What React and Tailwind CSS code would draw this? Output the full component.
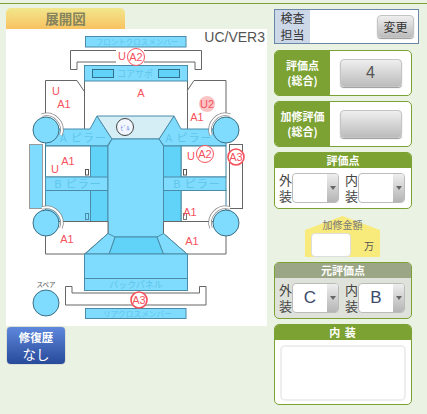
import React from 'react';

const bluePart = "fill-[#7fdcfe] stroke-[#4a8ca8]";
const darkPart = "fill-[#62d3f8] stroke-[#4a8ca8]";
const whitePart = "fill-white stroke-[#666]";

const Wheel = ({ x, y, side }) => {
    // ring only shows on the side facing the body
    const ring = side === 'left'
        ? `M${x - 4} ${y - 15}A15.5 15.5 0 0 1 ${x + 15} ${y + 5}`
        : `M${x + 4} ${y - 15}A15.5 15.5 0 0 0 ${x - 15} ${y + 5}`;
    return (
        <g>
            <path d={ring} fill="none" strokeWidth="3.5" className="stroke-[#888]" />
            <path d={ring} fill="none" strokeWidth="2" className="stroke-white" />
            <circle cx={x} cy={y} r="13" className="fill-[#7fdcfe] stroke-[#3d6f85]" />
        </g>
    );
};

const PartLabel = ({ x, y, size = 11, spacing = 0, children }) => (
    <text x={x} y={y} textAnchor="middle" fontSize={size} letterSpacing={spacing} className="fill-[#5fc5ea] font-['Noto_Sans_CJK_JP',sans-serif]">
        {children}
    </text>
);

const Mark = ({ x, y, children }) => (
    <text x={x} y={y} textAnchor="middle" fontSize="11" className="fill-[#f5525c] font-['Liberation_Sans',sans-serif]">
        {children}
    </text>
);

const Circled = ({ x, y, r = 8.5, thick, children }) => (
    <g>
        <circle cx={x} cy={y} r={r} strokeWidth={thick ? 1.6 : 1} className="fill-white stroke-[#f5525c]" />
        <Mark x={x} y={y + 4}>{children}</Mark>
    </g>
);

const CarDiagram = () => (
    <svg viewBox="6 29 261 297" className="block h-[297px] w-[261px] bg-white">
        {/* front cross member and bumper */}
        <rect x="85.5" y="36.5" width="100.5" height="10.5" className={bluePart} />
        <PartLabel x={137} y={44.5} size={7.5}>フロントクロスメンバー</PartLabel>
        <path d="M70.5 50.5H201.5V69.5H195V62H77V69.5H70.5Z" className={whitePart} />
        <rect x="116" y="48" width="28" height="16" className="fill-white" />

        {/* hood */}
        <rect x="84.5" y="65.5" width="103" height="64" className={whitePart} />
        <rect x="84.5" y="65.5" width="103" height="15.5" className={bluePart} />
        <rect x="92.5" y="69.5" width="21" height="8" className="fill-[#62d3f8] stroke-[#2f6f88]" />
        <rect x="158.5" y="69.5" width="21" height="8" className="fill-[#62d3f8] stroke-[#2f6f88]" />
        <PartLabel x={135} y={76.5} size={9}>コアサポ</PartLabel>

        {/* fenders */}
        <path d="M84 91L77 80.5H45.5V114" className="fill-white stroke-[#666]" />
        <path d="M187 91L194 80.5H226V114" className="fill-white stroke-[#666]" />

        {/* pillars and windshield */}
        <path d="M97 116L112 139L107 146H45.5V129H90Z" className={bluePart} />
        <path d="M174 116L159 139L164 146H226V129H181Z" className={bluePart} />
        <path d="M97 116H174L159 139H112Z" className="fill-[#d5edf5] stroke-[#4a8ca8]" />
        <circle cx="125" cy="127" r="8.5" className="fill-[#f2f7ff] stroke-[#444]" />
        <text x="125" y="129.5" textAnchor="middle" fontSize="6" className="fill-[#5a78e0] font-['Noto_Sans_CJK_JP',sans-serif]">ﾋﾞﾙ</text>
        <PartLabel x={83.5} y={142} spacing={1}>A ピラー</PartLabel>
        <PartLabel x={189} y={142} spacing={1}>A ピラー</PartLabel>

        {/* doors */}
        <rect x="45.5" y="146" width="45" height="31" className="fill-white stroke-[#3d7f99]" />
        <rect x="45.5" y="190" width="45" height="31.5" className={bluePart} />
        <rect x="181" y="146" width="45" height="31" className="fill-white stroke-[#3d7f99]" />
        <rect x="181" y="190" width="45" height="31.5" className="fill-white stroke-[#3d7f99]" />
        <rect x="90.5" y="146" width="17.5" height="75.5" className={darkPart} />
        <rect x="163" y="146" width="18" height="75.5" className={darkPart} />
        <rect x="45.5" y="177" width="62.5" height="13.5" className={bluePart} />
        <rect x="163" y="177" width="63" height="13.5" className={bluePart} />
        <PartLabel x={78} y={188} spacing={1}>B ピラー</PartLabel>
        <PartLabel x={197} y={188} spacing={1}>B ピラー</PartLabel>
        <rect x="85.5" y="169.5" width="3" height="5.5" className="fill-white stroke-[#555]" />
        <rect x="183.5" y="169.5" width="3" height="5.5" className="fill-white stroke-[#555]" />
        <rect x="85.5" y="213.5" width="3" height="6" className={bluePart} />
        <rect x="183.5" y="213.5" width="3" height="6" className="fill-white stroke-[#777]" />

        {/* rockers */}
        <rect x="29.5" y="144.5" width="13" height="64" className="fill-[#7fdcfe] stroke-[#999]" />
        <rect x="229.5" y="144.5" width="13" height="64" className={whitePart} />

        {/* roof */}
        <path d="M112 139H159L163.5 146V237H108V146Z" className={bluePart} />

        {/* quarters */}
        <path d="M45.5 221.5H108V233.5L84.5 254H45.5Z" className={whitePart} />
        <path d="M226 221.5H163.5V233.5L187 254H226Z" className={whitePart} />

        {/* trunk */}
        <path d="M115 237H157L163.5 254H109Z" className={darkPart} />
        <path d="M108 233.5L115 237L109 254H85Z" className={bluePart} />
        <path d="M163.5 233.5L157 237L163.5 254H187Z" className={bluePart} />
        <rect x="84.5" y="254" width="103" height="36.5" className={bluePart} />
        <line x1="84.5" y1="278.5" x2="187.5" y2="278.5" className="stroke-[#4a8ca8]" />
        <PartLabel x={136} y={288} size={9}>バックパネル</PartLabel>

        {/* rear bumper and cross member */}
        <path d="M65.5 286.5H72V293H199.5V286.5H206V305H65.5Z" className={whitePart} />
        <rect x="85.5" y="308.5" width="100.5" height="10" className={bluePart} />
        <PartLabel x={137.5} y={316.5} size={7.7}>リアクロスメンバー</PartLabel>

        <Wheel x={46} y={130} side="left" />
        <Wheel x={226} y={130} side="right" />
        <Wheel x={46} y={223} side="left" />
        <Wheel x={226} y={223} side="right" />
        <circle cx="46" cy="303" r="13" className="fill-[#7fdcfe] stroke-[#3d6f85]" />
        <text x="46" y="287" textAnchor="middle" fontSize="6.5" className="fill-[#555] font-['Noto_Sans_CJK_JP',sans-serif]">スペア</text>

        <text x="265" y="42" textAnchor="end" fontSize="14" className="fill-[#555] font-['Liberation_Sans',sans-serif]">UC/VER3</text>

        {/* damage marks */}
        <Mark x={122} y={60}>U</Mark>
        <Circled x={136} y={57}>A2</Circled>
        <Mark x={141} y={97}>A</Mark>
        <Mark x={56} y={95}>U</Mark>
        <Mark x={64} y={108}>A1</Mark>
        <circle cx="207" cy="104" r="8" className="fill-[#fbc4c4]" />
        <Mark x={207} y={108}>U2</Mark>
        <Mark x={197} y={121}>A1</Mark>
        <Mark x={68} y={165}>A1</Mark>
        <Mark x={55} y={173}>U</Mark>
        <Mark x={191} y={160}>U</Mark>
        <Circled x={205} y={154}>A2</Circled>
        <Circled x={236} y={157} r={8} thick>A3</Circled>
        <Mark x={190} y={216}>A1</Mark>
        <Mark x={67} y={243}>A1</Mark>
        <Mark x={192} y={245}>A1</Mark>
        <Circled x={139} y={300} r={8} thick>A3</Circled>
    </svg>
);

const GrayButton = ({ className, children }) => (
    <div className={`flex items-center justify-center rounded-[4px] border border-[#c4c4c4] bg-gradient-to-b from-[#efefef] to-[#bcbcbc] shadow-[0_1px_1px_#999] ${className}`}>
        {children}
    </div>
);

const ScoreCard = ({ label, value, className }) => (
    <div className={`flex h-[46px] w-[138px] overflow-hidden rounded-[5px] border border-[#7ba232] bg-white ${className}`}>
        <div className="flex w-[55px] items-center justify-center bg-[#7ba232] text-center text-[11px] font-bold leading-[15px] text-white">
            {label}
        </div>
        <div className="flex flex-1 items-center justify-center">
            <GrayButton className="h-[28px] w-[62px] font-['Liberation_Sans',sans-serif] text-[16px] text-[#555]">{value}</GrayButton>
        </div>
    </div>
);

const GradeSelect = ({ label, value }) => (
    <div className="flex items-center">
        <div className="w-[13px] text-[13px] leading-[16px] text-[#444]">{label}</div>
        <div className="flex h-[30px] w-[47px] overflow-hidden rounded-[4px] border border-[#bbb] bg-white">
            <div className="flex flex-1 items-center justify-center font-['Liberation_Sans',sans-serif] text-[17px] text-[#3b4a6b]">{value}</div>
            <div className="flex w-[11px] items-center justify-center bg-gradient-to-b from-[#eee] to-[#b5b5b5]">
                <div className="h-0 w-0 border-x-[3.5px] border-t-[4px] border-x-transparent border-t-[#666]" />
            </div>
        </div>
    </div>
);

const GradeCard = ({ title, headClass, bodyClass, outer, inner, className }) => (
    <div className={`w-[138px] overflow-hidden rounded-[5px] border border-[#7ba232] ${bodyClass} ${className}`}>
        <div className={`flex h-[15px] items-center justify-center text-[11px] font-bold text-white ${headClass}`}>{title}</div>
        <div className="flex justify-between py-[4px] pl-[4px] pr-[6px]">
            <GradeSelect label="外装" value={outer} />
            <GradeSelect label="内装" value={inner} />
        </div>
    </div>
);

export default function App() {
    return (
        <div className="h-[414px] w-[427px] overflow-hidden bg-[#eaf2e3] pt-[3px] font-['Noto_Sans_CJK_JP',sans-serif]">
            <div className="flex gap-[7px] border-t-[1.5px] border-[#7ba232] pl-[6px] pt-[4px]">
                {/* left column */}
                <div className="w-[261px]">
                    <div className="flex h-[21px] w-[119px] items-center justify-center rounded-t-[5px] bg-gradient-to-b from-[#f2e78c] to-[#f7c261] text-[13.5px] font-bold text-[#85845c]">
                        展開図
                    </div>
                    <CarDiagram />
                    <div className="ml-[1px] mt-[1px] flex h-[37px] w-[58px] flex-col items-center justify-center rounded-[4px] bg-gradient-to-b from-[#5f88dd] to-[#284a9a] text-[11.5px] leading-[17px] text-white shadow-[0_0_1px_#555]">
                        <span className="font-bold">修復歴</span>
                        <span className="text-[13.5px]">なし</span>
                    </div>
                </div>

                {/* right column */}
                <div className="w-[146px]">
                    <div className="mt-[1px] flex h-[35px] w-[145px] border border-[#6b87a8] bg-white">
                        <div className="flex w-[35px] items-center justify-center bg-[#ccd8e8] text-center text-[12px] leading-[16.5px] text-[#333]">
                            検査<br />担当
                        </div>
                        <div className="flex flex-1 items-center justify-end pr-[4px]">
                            <GrayButton className="h-[23px] w-[37px] text-[12px] text-[#333]">変更</GrayButton>
                        </div>
                    </div>

                    <ScoreCard className="mt-[6px]" label={<>評価点<br />(総合)</>} value="4" />
                    <ScoreCard className="mt-[5px]" label={<>加修評価<br />(総合)</>} value="" />

                    <GradeCard className="mt-[5px]" title="評価点" headClass="bg-[#7ba232]" bodyClass="bg-white" outer="" inner="" />

                    {/* yellow house shape sits behind the amount box */}
                    <div className="relative ml-[31px] mt-[7px] flex h-[41px] w-[75px] flex-col items-center">
                        <div className="absolute inset-0 bg-[#f9ea7c] [clip-path:polygon(50%_0,100%_34%,100%_100%,0_100%,0_34%)]" />
                        <div className="relative mt-[1px] h-[15px] text-[10px] leading-[15px] text-[#777]">加修金額</div>
                        <div className="relative mt-[1px] flex w-full items-center pl-[6px]">
                            <div className="h-[24px] w-[40px] rounded-[4px] border border-[#ddd] bg-white" />
                            <div className="ml-[13px] text-[10px] text-[#555]">万</div>
                        </div>
                    </div>

                    <GradeCard className="mt-[5px]" title="元評価点" headClass="bg-[#9ba686]" bodyClass="bg-[#dfe2da]" outer="C" inner="B" />

                    <div className="mt-[5px] h-[81px] w-[138px] overflow-hidden rounded-[5px] border border-[#7ba232] bg-white">
                        <div className="flex h-[15px] items-center justify-center bg-[#7ba232] text-[11px] font-bold tracking-[1px] text-white">内 装</div>
                        <div className="mx-[5px] mt-[5px] h-[56px] rounded-[5px] border-2 border-[#eee] bg-white" />
                    </div>
                </div>
            </div>
        </div>
    );
}
